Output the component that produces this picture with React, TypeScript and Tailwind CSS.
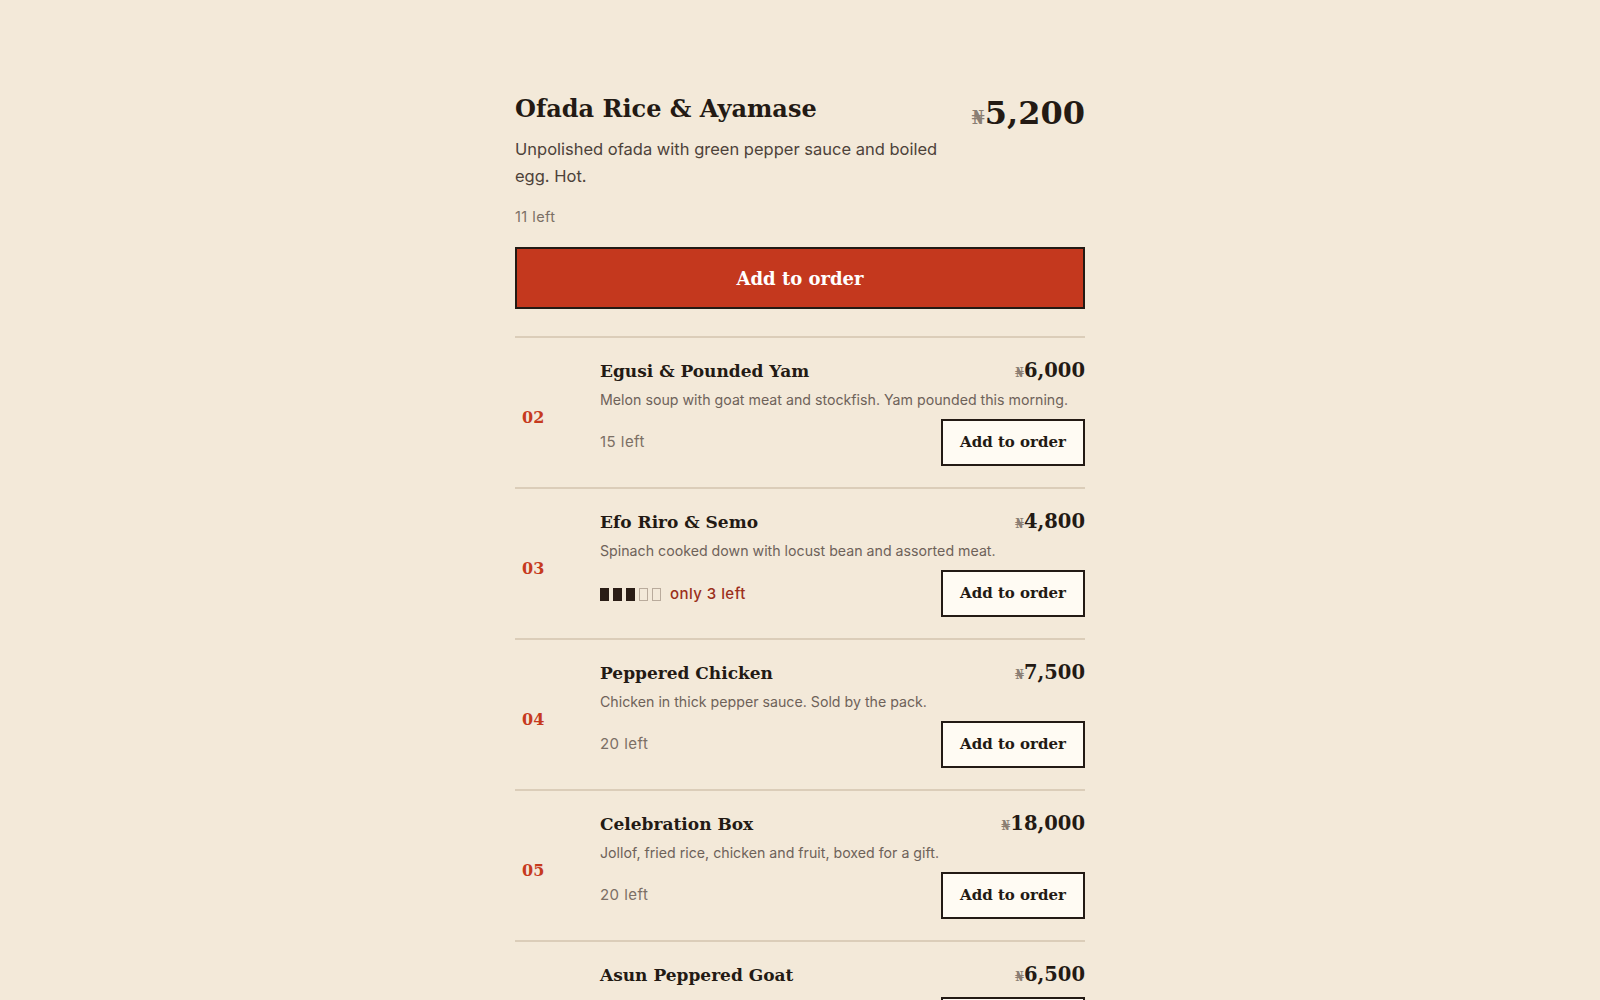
import React from "react";

const serif = { fontFamily: '"DejaVu Serif", "Liberation Serif", serif' };

type Item = {
  n: string;
  name: string;
  price: string;
  desc?: string;
  left: number;
  low?: boolean;
};

const items: Item[] = [
  { n: "02", name: "Egusi & Pounded Yam", price: "6,000", desc: "Melon soup with goat meat and stockfish. Yam pounded this morning.", left: 15 },
  { n: "03", name: "Efo Riro & Semo", price: "4,800", desc: "Spinach cooked down with locust bean and assorted meat.", left: 3, low: true },
  { n: "04", name: "Peppered Chicken", price: "7,500", desc: "Chicken in thick pepper sauce. Sold by the pack.", left: 20 },
  { n: "05", name: "Celebration Box", price: "18,000", desc: "Jollof, fried rice, chicken and fruit, boxed for a gift.", left: 20 },
  { n: "06", name: "Asun Peppered Goat", price: "6,500", left: 12 },
];

function Row({ it }: { it: Item }) {
  return (
    <div className="flex border-b-2 border-[#dbcdb9]">
      <div className="w-[85px] pl-[7px] pt-[10px] flex items-center">
        <span className="text-[16px] leading-[20px] font-bold text-[#c63a1e]" style={serif}>
          {it.n}
        </span>
      </div>
      <div className="flex-1 pt-[19px] pb-[21px]">
        <div className="flex justify-between items-baseline h-[28px]">
          <span className="text-[17px] leading-[28px] font-bold text-[#231a14]" style={serif}>
            {it.name}
          </span>
          <span className="font-bold text-[#231a14] leading-[28px] whitespace-nowrap" style={serif}>
            <span className="text-[13px] text-[#8a7e73]">₦</span>
            <span className="text-[19.5px]">{it.price}</span>
          </span>
        </div>
        {it.desc && (
          <p className="mt-[4px] text-[14.2px] leading-[22px] text-[#6e6259]">{it.desc}</p>
        )}
        <div className="mt-[8px] flex justify-between items-center">
          {it.low ? (
            <div className="flex items-center pt-[2px]">
              <div className="flex gap-[4px]">
                <span className="w-[9px] h-[13px] bg-[#2a1d16]" />
                <span className="w-[9px] h-[13px] bg-[#2a1d16]" />
                <span className="w-[9px] h-[13px] bg-[#2a1d16]" />
                <span className="w-[9px] h-[13px] border border-[#b9ab9c]" />
                <span className="w-[9px] h-[13px] border border-[#b9ab9c]" />
              </div>
              <span className="ml-[9px] text-[15px] font-medium tracking-[0.03em] text-[#9b2f1b]">
                only 3 left
              </span>
            </div>
          ) : (
            <span className="text-[15px] tracking-[0.03em] text-[#7b6f65]">{it.left} left</span>
          )}
          <button
            className="w-[144px] h-[47px] border-2 border-[#231a14] bg-[#fffbf3] text-[15px] font-bold text-[#231a14]"
            style={serif}
          >
            Add to order
          </button>
        </div>
      </div>
    </div>
  );
}

export default function App() {
  return (
    <div
      className="h-screen bg-[#f3e9d9] overflow-hidden"
      style={{ fontFamily: 'Inter, "Noto Sans", sans-serif' }}
    >
      <div className="w-[570px] mx-auto pt-[91px]">
        <div className="flex justify-between items-start">
          <div>
            <h1 className="text-[24px] leading-[36px] font-bold text-[#231a14]" style={serif}>
              Ofada Rice &amp; Ayamase
            </h1>
            <p className="mt-[9px] max-w-[440px] text-[16.5px] leading-[27px] text-[#4d4239]">
              Unpolished ofada with green pepper sauce and boiled egg. Hot.
            </p>
            <p className="mt-[17px] text-[14.5px] leading-[20px] tracking-[0.03em] text-[#7b6f65]">11 left</p>
          </div>
          <div className="font-bold text-[#231a14] whitespace-nowrap leading-[44px]" style={serif}>
            <span className="text-[19px] text-[#8a7e73]">₦</span>
            <span className="text-[32px]">5,200</span>
          </div>
        </div>
        <button
          className="mt-[20px] w-full h-[62px] bg-[#c4381e] border-2 border-[#231a14] text-[18px] font-bold text-white"
          style={serif}
        >
          Add to order
        </button>
        <div className="mt-[27px] border-t-2 border-[#dbcdb9]">
          {items.map((it) => (
            <Row key={it.n} it={it} />
          ))}
        </div>
      </div>
    </div>
  );
}
